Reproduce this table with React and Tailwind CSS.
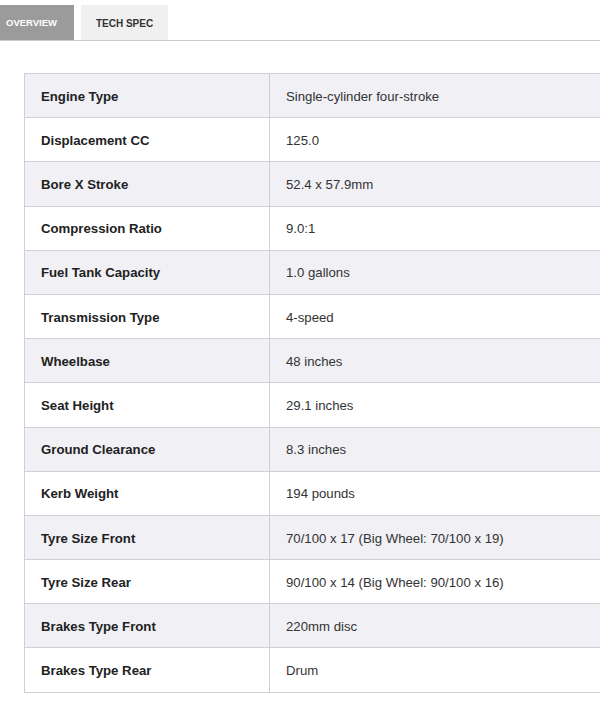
import React from 'react';

const specs = [
  ['Engine Type', 'Single-cylinder four-stroke'],
  ['Displacement CC', '125.0'],
  ['Bore X Stroke', '52.4 x 57.9mm'],
  ['Compression Ratio', '9.0:1'],
  ['Fuel Tank Capacity', '1.0 gallons'],
  ['Transmission Type', '4-speed'],
  ['Wheelbase', '48 inches'],
  ['Seat Height', '29.1 inches'],
  ['Ground Clearance', '8.3 inches'],
  ['Kerb Weight', '194 pounds'],
  ['Tyre Size Front', '70/100 x 17 (Big Wheel: 70/100 x 19)'],
  ['Tyre Size Rear', '90/100 x 14 (Big Wheel: 90/100 x 16)'],
  ['Brakes Type Front', '220mm disc'],
  ['Brakes Type Rear', 'Drum'],
];

export default function App() {
  return (
    <div className="w-[600px] h-[707px] overflow-hidden bg-white" style={{ fontFamily: '"Liberation Sans", Arial, sans-serif' }}>
      {/* tabs */}
      <div className="flex items-end gap-[7px] pt-[5px] border-b border-[#c9c9d1]">
        <button className="w-[74px] h-[35px] bg-[#9b9b9b] text-white text-[9.5px] font-bold text-left pl-[6px] pt-[1px]">OVERVIEW</button>
        <button className="w-[87px] h-[35px] bg-[#f0f0f0] text-[#333] text-[10px] font-bold pt-[1px]">TECH SPEC</button>
      </div>

      <div className="pt-[32px] pl-[24px]">
        <table className="w-[620px] border-collapse text-[13.2px]">
          <tbody>
            {specs.map(([label, value], i) => (
              <tr key={label} className={`h-[44.2px] ${i % 2 === 0 ? 'bg-[#f0f0f5]' : 'bg-white'}`}>
                <td className="w-[245px] border border-[#cfcfd7] pl-[16px] pt-[2px] font-bold text-[#222]">{label}</td>
                <td className="border border-[#cfcfd7] pl-[16px] pt-[2px] text-[#333]">{value}</td>
              </tr>
            ))}
          </tbody>
        </table>
      </div>
    </div>
  );
}
